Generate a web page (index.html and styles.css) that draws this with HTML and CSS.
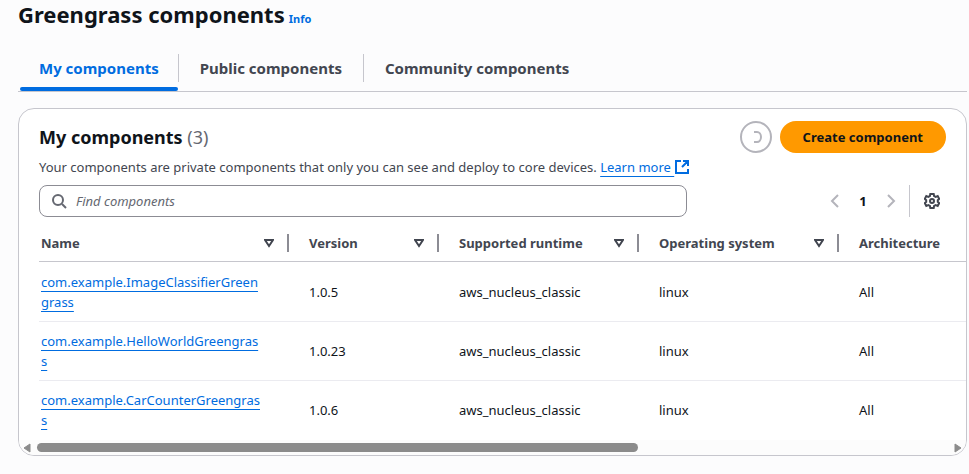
FILE: index.html
```html
<!DOCTYPE html>
<html lang="en">
<head>
<meta charset="utf-8">
<title>Greengrass components</title>
<link rel="stylesheet" href="styles.css">
</head>
<body>
<main class="page">
  <header class="page-header">
    <h1>Greengrass components</h1>
    <a class="info" href="#info">Info</a>
  </header>

  <nav class="tabs">
    <a class="tab active" href="#my"><span>My components</span></a>
    <a class="tab" href="#public"><span>Public components</span></a>
    <a class="tab" href="#community"><span>Community components</span></a>
  </nav>

  <section class="card">
    <div class="card-top">
      <div class="card-title">
        <h2>My components <span class="count">(3)</span></h2>
        <div class="actions">
          <button class="refresh" type="button" aria-label="Refreshing">
            <svg viewBox="0 0 16 16" width="16" height="16"><path d="M6 3h3a4 5 0 0 1 0 10H6" /></svg>
          </button>
          <button class="create" type="button">Create component</button>
        </div>
      </div>
      <p class="description">Your components are private components that only you can see and deploy to core devices. <a class="learn" href="#learn"><span class="link">Learn more </span><svg viewBox="0 0 16 16" width="16" height="16" aria-hidden="true"><path d="M7 2H2v12h12v-4M9 2h5v5M14 2L8 8"/></svg></a></p>
      <div class="tools">
        <div class="search">
          <svg viewBox="0 0 16 16" width="16" height="16" aria-hidden="true"><circle cx="6" cy="7" r="5"/><path d="M10 11l4 4"/></svg>
          <input type="text" placeholder="Find components" aria-label="Find components">
        </div>
        <div class="paging">
          <button class="icon pale" type="button" aria-label="Previous page"><svg viewBox="0 0 16 16" width="16" height="16"><path d="M11 2L5 8l6 6"/></svg></button>
          <button class="icon number" type="button">1</button>
          <button class="icon pale" type="button" aria-label="Next page"><svg viewBox="0 0 16 16" width="16" height="16"><path d="M5 2l6 6-6 6"/></svg></button>
          <span class="rule"></span>
          <button class="icon gear" type="button" aria-label="Preferences"><svg viewBox="0 0 16 16" width="16" height="16"><path d="M6.300 1h3.400l.4 2 1.600.9 2-.8 1.500 2.700L13.800 7.200v1.600l1.400 1.400-1.500 2.700-2-.8-1.600.9-.4 2H6.300l-.4-2-1.600-.9-2 .8L.8 10.200 2.200 8.800V7.200L.8 5.800l1.500-2.700 2 .8L5.900 3z"/><circle cx="8" cy="8" r="2"/></svg></button>
        </div>
      </div>
    </div>

    <div class="table-area">
      <table>
        <colgroup><col class="c-name"><col class="c-version"><col class="c-wide"><col class="c-wide"><col class="c-wide"></colgroup>
        <thead>
          <tr>
            <th><div class="head">Name <svg viewBox="0 0 10 10" width="10" height="10"><path d="M1 2h8L5 8z"/></svg></div></th>
            <th><div class="head">Version <svg viewBox="0 0 10 10" width="10" height="10"><path d="M1 2h8L5 8z"/></svg></div></th>
            <th><div class="head">Supported runtime <svg viewBox="0 0 10 10" width="10" height="10"><path d="M1 2h8L5 8z"/></svg></div></th>
            <th><div class="head">Operating system <svg viewBox="0 0 10 10" width="10" height="10"><path d="M1 2h8L5 8z"/></svg></div></th>
            <th><div class="head">Architecture</div></th>
          </tr>
        </thead>
        <tbody>
          <tr><td><a class="link" href="#image">com.example.ImageClassifierGreen<wbr>grass</a></td><td>1.0.5</td><td>aws_nucleus_classic</td><td>linux</td><td>All</td></tr>
          <tr><td><a class="link" href="#hello">com.example.HelloWorldGreengras<wbr>s</a></td><td>1.0.23</td><td>aws_nucleus_classic</td><td>linux</td><td>All</td></tr>
          <tr><td><a class="link" href="#car">com.example.CarCounterGreengras<wbr>s</a></td><td>1.0.6</td><td>aws_nucleus_classic</td><td>linux</td><td>All</td></tr>
        </tbody>
      </table>
    </div>
    <div class="scrollbar" aria-hidden="true">
      <svg viewBox="0 0 8 10" width="8" height="10"><path d="M7 1v8L1 5z"/></svg>
      <div class="track"><div class="thumb"></div></div>
      <svg viewBox="0 0 8 10" width="8" height="10"><path d="M1 1v8l6-4z"/></svg>
    </div>
  </section>
</main>
</body>
</html>
```
FILE: styles.css
```css
* { box-sizing: border-box; }

body {
  margin: 0;
  background: #fcfcfd;
  color: #0f141a;
  font: 13px/20px "Noto Sans", "Open Sans", sans-serif;
}

h1, h2, p { margin: 0; }
a { color: #006ce0; text-decoration: none; }
button { font: inherit; cursor: pointer; }
svg { display: block; fill: none; stroke: currentColor; stroke-width: 2; }

.page { padding: 0 2px 18px 18px; }

.page-header { display: flex; align-items: baseline; gap: 4px; }
h1 { font-size: 22px; line-height: 28px; font-weight: 700; }
.info { font-size: 11px; font-weight: 700; }

.tabs { display: flex; margin-top: 18px; border-bottom: 1px solid #c6c6cd; }
.tab {
  display: flex;
  padding: 7px 0 5px;
  border-bottom: 4px solid transparent;
  color: #424650;
  font-size: 15px;
  font-weight: 700;
}
.tab span { padding: 4px 21px; border-right: 1px solid #c6c6cd; }
.tab:first-child span { padding-right: 19px; }
.tab:last-child span { border-right: 0; }
.tab.active { color: #006ce0; position: relative; }
.tab.active::after {
  content: "";
  position: absolute;
  left: 2px;
  right: 1px;
  bottom: -4px;
  height: 4px;
  border-radius: 2px;
  background: #006ce0;
}

.card {
  margin-top: 16px;
  border: 1px solid #c6c6cd;
  border-radius: 16px;
  background: #fff;
  overflow: hidden;
}
.card-top { padding: 12px 20px 0; }
.card-title { display: flex; justify-content: space-between; align-items: center; }
h2 { font-size: 18px; line-height: 24px; font-weight: 700; }
.count { color: #656871; font-weight: 400; }
.actions { display: flex; gap: 8px; }
.refresh {
  display: flex;
  align-items: center;
  justify-content: center;
  width: 32px;
  height: 32px;
  padding: 0;
  border: 2px solid #b4b4bb;
  border-radius: 50%;
  background: #fff;
  color: #b4b4bb;
}
.create {
  height: 32px;
  padding: 0 23px;
  border: 0;
  border-radius: 16px;
  background: #ff9900;
  color: #0f141a;
  font-weight: 700;
}

.description { margin-top: 4px; color: #424650; }
.learn svg { display: inline-block; vertical-align: -3px; }
.link {
  text-decoration: underline;
  text-decoration-thickness: 1px;
  text-decoration-skip-ink: none;
  text-underline-offset: 4px;
  white-space: pre-wrap;
}

.tools { display: flex; justify-content: space-between; align-items: center; gap: 20px; margin-top: 8px; }
.search {
  display: flex;
  flex: 1;
  align-items: center;
  gap: 8px;
  max-width: 648px;
  height: 32px;
  padding: 0 12px;
  border: 1px solid #8c8c94;
  border-radius: 8px;
  color: #656871;
}
.search input { flex: 1; min-width: 0; padding: 0; border: 0; outline: 0; background: none; font: inherit; }
.search input::placeholder { color: #656871; font-style: italic; opacity: 1; }

.paging { display: flex; align-items: center; }
.icon {
  display: flex;
  align-items: center;
  justify-content: center;
  width: 28px;
  height: 32px;
  padding: 0;
  border: 0;
  background: none;
  color: #424650;
}
.pale { color: #b4b4bb; }
.number { color: #0f141a; font-weight: 700; }
.rule { height: 32px; margin: 0 8px 0 4px; border-left: 1px solid #c6c6cd; }

.table-area { margin-left: 20px; overflow: hidden; }
table { width: 1000px; table-layout: fixed; border-collapse: separate; border-spacing: 0; }
.c-name { width: 250px; }
.c-version { width: 150px; }
.c-wide { width: 200px; }
th { padding: 17px 0 9px; border-bottom: 1px solid #c6c6cd; color: #424650; text-align: left; }
.head {
  display: flex;
  align-items: center;
  justify-content: space-between;
  height: 18px;
  padding: 0 13px 0 20px;
  border-right: 2px solid #8c8c94;
}
th:last-child .head { border-right: 0; }
td { padding: 9px 20px; border-bottom: 1px solid #ebebf0; }
th:first-child .head { padding-left: 2px; }
td:first-child { padding: 9px 28px 9px 2px; }
tbody tr:first-child td { padding-top: 10px; }
tbody tr:last-child td { border-bottom-color: transparent; }

.scrollbar { display: flex; align-items: center; gap: 6px; height: 15px; padding: 0 4px; background: #fcfcfc; color: #8b8b8b; }
.scrollbar svg { fill: currentColor; stroke-width: 1; }
.track { flex: 1; }
.thumb { width: 66%; height: 9px; border-radius: 5px; background: #8b8b8b; }
```
